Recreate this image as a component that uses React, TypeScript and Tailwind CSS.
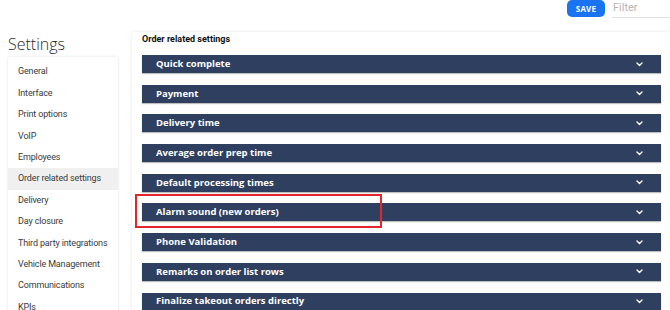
import React from "react";

const menu = [
  "General",
  "Interface",
  "Print options",
  "VoIP",
  "Employees",
  "Order related settings",
  "Delivery",
  "Day closure",
  "Third party integrations",
  "Vehicle Management",
  "Communications",
  "KPIs",
];

const sections = [
  "Quick complete",
  "Payment",
  "Delivery time",
  "Average order prep time",
  "Default processing times",
  "Alarm sound (new orders)",
  "Phone Validation",
  "Remarks on order list rows",
  "Finalize takeout orders directly",
];

function Chevron() {
  return (
    <svg width="7" height="5" viewBox="0 0 7 5" className="shrink-0">
      <polyline
        points="1,1 3.5,3.5 6,1"
        fill="none"
        stroke="white"
        strokeWidth="1.4"
        strokeLinecap="round"
        strokeLinejoin="round"
      />
    </svg>
  );
}

export default function App() {
  return (
    <div className="relative w-[670px] h-[310px] overflow-hidden bg-white font-['Roboto',sans-serif]">
      {/* top actions */}
      <div className="flex justify-end items-start h-[19px] gap-[7px]">
        <button className="h-[17px] w-[38px] rounded-[5px] bg-[#1a73f0] text-white text-[8px] font-bold tracking-wide font-['Open_Sans',sans-serif]">
          SAVE
        </button>
        <div className="w-[58px] h-[18px] border-b border-[#e2e2e2] flex items-center">
          <span className="text-[11px] text-[#b5b5b5] pl-[1px]">Filter</span>
        </div>
      </div>

      <div className="flex">
        {/* sidebar */}
        <div className="w-[132px] shrink-0 pl-[8px] pr-[14px]">
          <h1 className="mt-[12px] h-[26px] text-[16px] leading-[26px] font-light text-[#2a2a2a] font-['Open_Sans',sans-serif]">
            Settings
          </h1>
          <div className="rounded-[3px] bg-white shadow-[0_0_3px_rgba(0,0,0,0.12)] pt-[4.5px] pb-2">
            {menu.map((m) => (
              <div
                key={m}
                className={
                  "h-[21.4px] flex items-center pl-[10px] text-[9px] tracking-[-0.15px] text-[#3a3a3a] " +
                  (m === "Order related settings" ? "bg-[#f0f0f0]" : "")
                }
              >
                {m}
              </div>
            ))}
          </div>
        </div>

        {/* main panel */}
        <div className="flex-1 mt-[13px] bg-white shadow-[0_0_3px_rgba(0,0,0,0.1)] pl-[10px] pr-[9px] pt-[1px]">
          <div className="h-[10px] leading-[10px] mt-[1px] text-[9px] font-bold text-[#111]">
            Order related settings
          </div>
          <div className="mt-[11px] flex flex-col gap-[11.7px]">
            {sections.map((s) => (
              <div
                key={s}
                className="h-[18px] flex items-center justify-between pl-[14px] pr-[18px] bg-[#2e3f5f] shadow-[0_1px_1px_rgba(0,0,0,0.25)]"
              >
                <span className="text-white text-[9.5px] font-bold font-['Open_Sans',sans-serif]">
                  {s}
                </span>
                <Chevron />
              </div>
            ))}
          </div>
        </div>
      </div>

      {/* highlight box */}
      <div className="absolute left-[135px] top-[194px] w-[247px] h-[34px] border-2 border-[#e3262d]" />
    </div>
  );
}
